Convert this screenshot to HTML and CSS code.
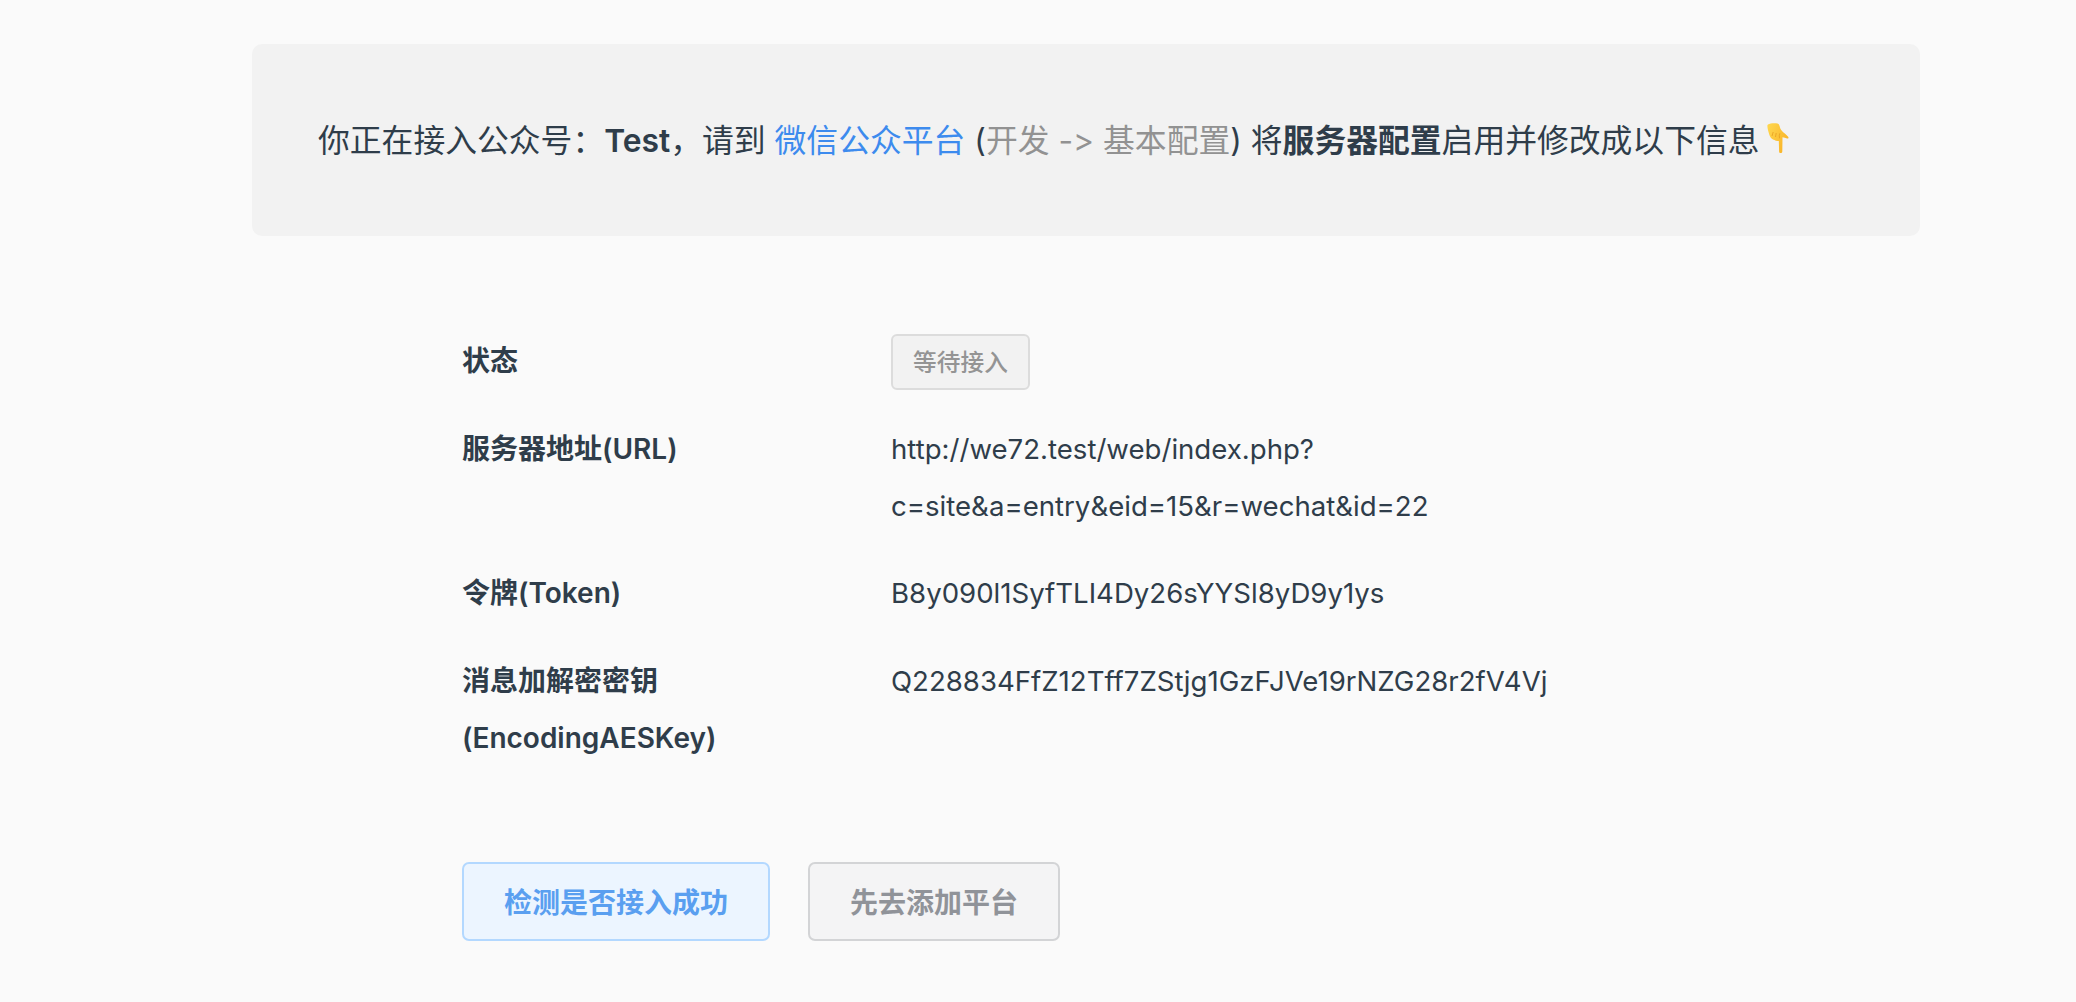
FILE: index.html
```html
<!DOCTYPE html>
<html lang="zh-CN">
<head>
<meta charset="utf-8">
<title>接入公众号</title>
<link rel="stylesheet" href="styles.css">
</head>
<body>
<main class="page">
  <section class="banner">
    <p class="banner-text">你正在接入公众号：<strong>Test</strong>，请到 <a class="link" href="#">微信公众平台</a> (<span class="muted">开发 -&gt; 基本配置</span>) 将<strong>服务器配置</strong>启用并修改成以下信息<svg class="emoji" viewBox="0 0 22 31" aria-hidden="true"><defs><linearGradient id="h" x1="0" y1="0" x2="1" y2="0.6"><stop offset="0" stop-color="#ffd84f"/><stop offset="1" stop-color="#f9b428"/></linearGradient></defs><path fill="url(#h)" d="M1 1.5C3 .2 8 0 10.5.6c1.6.4 2 2 2.4 3.6.5 2 1.8 3.6 3.6 5.2 1.6 1.4 4 3.2 4.8 4.6.5 1-.2 1.7-1.2 1.5-1.6-.3-3-.9-4.6-1.2l-.2 14.2c-.1 1-.7 1.6-1.6 1.6s-1.6-.6-1.6-1.6l-.3-10.6c-1.6.3-3.2.1-4.4-.9C3.300 15.600 2.600 12.800 1.800 10 1 7.300.3 4.600.4 2.600.4 2.100.6 1.800 1 1.500z"/><path fill="none" stroke="#e39a1c" stroke-width=".7" d="M12.500 15.300c-.3-2-.2-3.400.3-5M5 13l1.200-4M8.500 14l.7-4"/></svg></p>
  </section>
  <section class="details">
    <div class="row">
      <div class="label">状态</div>
      <div class="value"><span class="badge">等待接入</span></div>
    </div>
    <div class="row">
      <div class="label">服务器地址(URL)</div>
      <div class="value">http://we72.test/web/index.php?<br>c=site&amp;a=entry&amp;eid=15&amp;r=wechat&amp;id=22</div>
    </div>
    <div class="row">
      <div class="label">令牌(Token)</div>
      <div class="value">B8y090l1SyfTLI4Dy26sYYSl8yD9y1ys</div>
    </div>
    <div class="row">
      <div class="label">消息加解密密钥<br>(EncodingAESKey)</div>
      <div class="value">Q228834FfZ12Tff7ZStjg1GzFJVe19rNZG28r2fV4Vj</div>
    </div>
    <div class="actions">
      <button class="btn btn-primary" type="button">检测是否接入成功</button>
      <button class="btn btn-plain" type="button">先去添加平台</button>
    </div>
  </section>
</main>
</body>
</html>
```
FILE: styles.css
```css
* { box-sizing: border-box; }
html, body { margin: 0; height: 100%; overflow: hidden; }
body {
  background: #fafafa;
  color: #2f3d4a;
  font-family: "Inter", "Noto Sans CJK SC", sans-serif;
  font-variant-ligatures: none;
  font-feature-settings: "calt" 0, "liga" 0;
}
.page { padding: 44px 156px 0 252px; }
.banner {
  height: 192px;
  display: flex;
  align-items: center;
  padding: 2px 0 0 66px;
  background: #f2f2f2;
  border-radius: 10px;
}
.banner-text { margin: 0; font-size: 31.800px; line-height: 48px; white-space: nowrap; }
.banner-text strong { font-weight: 600; }
.link { color: #3d8bee; text-decoration: none; }
.muted { color: #929292; }
.emoji { width: 22px; height: 31px; margin-left: 7px; vertical-align: -2px; }
.details { padding: 97px 0 0 210px; }
.row {
  display: grid;
  grid-template-columns: 429px 1fr;
  margin-bottom: 30.500px;
  font-size: 28px;
  line-height: 57px;
}
.label { font-weight: 600; }
.value { font-size: 27.600px; }
.badge {
  display: inline-flex;
  align-items: center;
  justify-content: center;
  width: 139px;
  height: 56px;
  font-size: 23.700px;
  font-weight: 500;
  color: #949494;
  background: #f2f2f2;
  border: 2px solid #dcdcdc;
  border-radius: 6px;
  vertical-align: top;
  margin-top: 1px;
}
.actions { display: flex; gap: 38px; margin-top: 95px; }
.btn {
  height: 79px;
  border-radius: 7px;
  font-family: inherit;
  font-size: 28px;
  font-weight: 600;
  padding: 0;
}
.btn-primary { width: 308px; color: #5a9ff0; background: #ecf5ff; border: 2px solid #b3d8ff; }
.btn-plain { width: 252px; color: #909399; background: #f4f4f5; border: 2px solid #d3d4d6; }
```
